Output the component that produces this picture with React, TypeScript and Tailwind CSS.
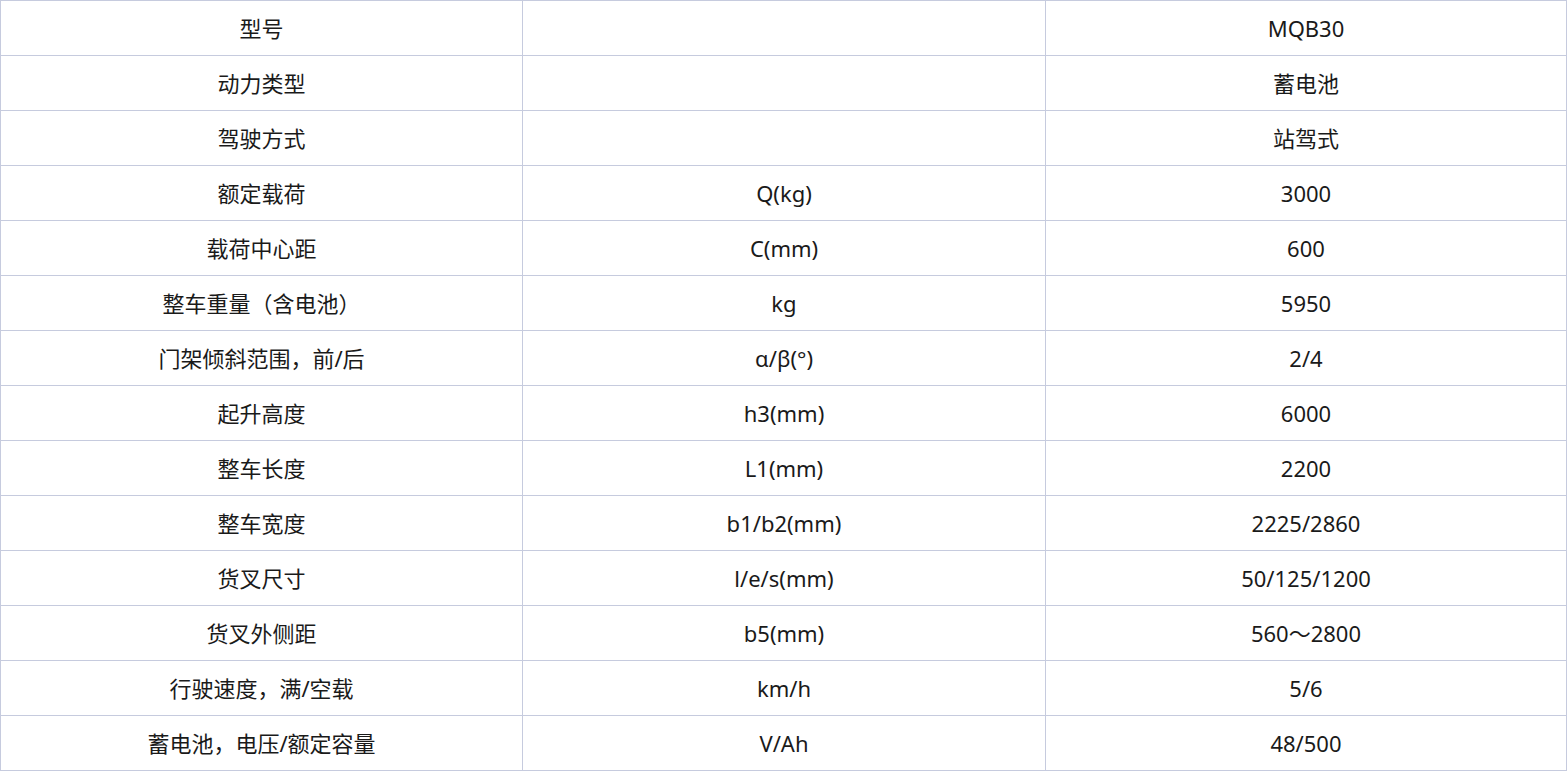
import React from "react";

const rows: [string, string, string][] = [
  ["型号", "", "MQB30"],
  ["动力类型", "", "蓄电池"],
  ["驾驶方式", "", "站驾式"],
  ["额定载荷", "Q(kg)", "3000"],
  ["载荷中心距", "C(mm)", "600"],
  ["整车重量（含电池）", "kg", "5950"],
  ["门架倾斜范围，前/后", "α/β(°)", "2/4"],
  ["起升高度", "h3(mm)", "6000"],
  ["整车长度", "L1(mm)", "2200"],
  ["整车宽度", "b1/b2(mm)", "2225/2860"],
  ["货叉尺寸", "l/e/s(mm)", "50/125/1200"],
  ["货叉外侧距", "b5(mm)", "560～2800"],
  ["行驶速度，满/空载", "km/h", "5/6"],
  ["蓄电池，电压/额定容量", "V/Ah", "48/500"],
];

export default function App() {
  return (
    <div className="w-[1567px] bg-white">
      <table
        className="w-[1566px] table-fixed border-collapse text-[22px] text-[#1a1a1a]"
        style={{ fontFamily: '"Noto Sans", "Noto Sans CJK SC", sans-serif' }}
      >
        <colgroup>
          <col className="w-[522px]" />
          <col className="w-[523px]" />
          <col className="w-[521px]" />
        </colgroup>
        <tbody>
          {rows.map((r, i) => (
            <tr key={i} className="h-[55px]">
              {r.map((c, j) => (
                <td
                  key={j}
                  className="border border-[#c6cbde] p-0 text-center align-middle leading-none"
                >
                  {c}
                </td>
              ))}
            </tr>
          ))}
        </tbody>
      </table>
    </div>
  );
}
